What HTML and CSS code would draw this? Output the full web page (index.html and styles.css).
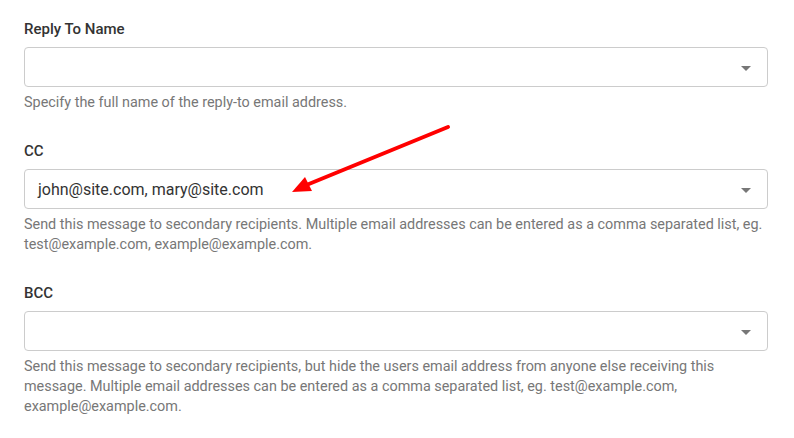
FILE: index.html
```html
<!DOCTYPE html>
<html>
<head>
<meta charset="utf-8">
<link rel="stylesheet" href="styles.css">
</head>
<body>
<div class="form">
  <div class="field">
    <div class="label">Reply To Name</div>
    <div class="select"><span class="value"></span><span class="caret"></span></div>
    <div class="help">Specify the full name of the reply-to email address.</div>
  </div>
  <div class="field">
    <div class="label">CC</div>
    <div class="select"><span class="value">john@site.com, mary@site.com</span><span class="caret"></span></div>
    <div class="help">Send this message to secondary recipients. Multiple email addresses can be entered as a comma separated list, eg. test@example.com, example@example.com.</div>
  </div>
  <div class="field">
    <div class="label">BCC</div>
    <div class="select"><span class="value"></span><span class="caret"></span></div>
    <div class="help">Send this message to secondary recipients, but hide the users email address from anyone else receiving this message. Multiple email addresses can be entered as a comma separated list, eg. test@example.com, example@example.com.</div>
  </div>
</div>
<svg class="arrow" width="794" height="438" viewBox="0 0 794 438">
  <line x1="448" y1="127" x2="304" y2="186" stroke="#ff0000" stroke-width="4" stroke-linecap="round"/>
  <polygon points="292,192 305,177 312,191" fill="#ff0000"/>
</svg>
</body>
</html>
```
FILE: styles.css
```css
html, body {
  margin: 0;
  padding: 0;
  background: #ffffff;
}
body {
  font-family: Roboto, "Liberation Sans", Arial, sans-serif;
  position: relative;
  width: 794px;
  height: 438px;
  overflow: hidden;
}
.form {
  padding: 19px 26px 0 24px;
  display: flex;
  flex-direction: column;
  gap: 28px;
}
.field {
  display: flex;
  flex-direction: column;
}
.label {
  font-size: 15px;
  line-height: 20px;
  font-weight: 500;
  color: #333333;
}
.select {
  margin-top: 8px;
  height: 40px;
  box-sizing: border-box;
  border: 1px solid #cccccc;
  border-radius: 4px;
  display: flex;
  align-items: center;
  justify-content: space-between;
  padding: 0 16px 0 13px;
}
.value {
  font-size: 16px;
  color: #333333;
}
.caret {
  width: 0;
  height: 0;
  border-left: 5px solid transparent;
  border-right: 5px solid transparent;
  border-top: 5px solid #777777;
  margin-top: 2px;
}
.help {
  margin-top: 6px;
  font-size: 14.4px;
  line-height: 20px;
  color: #777777;
}
.arrow {
  position: absolute;
  left: 0;
  top: 0;
  pointer-events: none;
}
```
